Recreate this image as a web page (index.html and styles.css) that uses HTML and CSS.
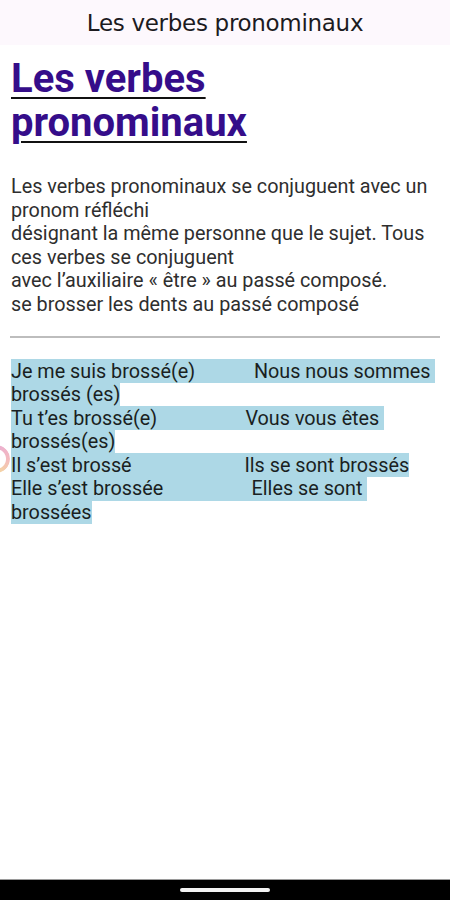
FILE: index.html
```html
<!DOCTYPE html>
<html lang="fr">
<head>
<meta charset="utf-8">
<title>Les verbes pronominaux</title>
<link rel="stylesheet" href="styles.css">
</head>
<body>
<div class="screen">
  <header class="appbar">Les verbes pronominaux</header>
  <main class="content">
    <h1 class="title">Les verbes pronominaux</h1>
    <p class="intro">Les verbes pronominaux se conjuguent avec un pronom réfléchi<br>désignant la même personne que le sujet. Tous ces verbes se conjuguent<br>avec l’auxiliaire « être » au passé composé.<br>se brosser les dents au passé composé</p>
    <hr class="rule">
    <p class="conj"><span class="hl">Je me suis brossé(e)            Nous nous sommes brossés (es)
Tu t’es brossé(e)                  Vous vous êtes brossés(es)
Il s’est brossé                       Ils se sont brossés
Elle s’est brossée                  Elles se sont brossées</span></p>
  </main>
  <div class="touch"></div>
  <footer class="navbar"><span class="pill"></span></footer>
</div>
</body>
</html>
```
FILE: styles.css
```css
html, body {
  margin: 0;
  padding: 0;
  background: #ffffff;
}
.screen {
  position: relative;
  width: 450px;
  height: 900px;
  display: flex;
  flex-direction: column;
  overflow: hidden;
  font-family: Roboto, "Noto Sans", sans-serif;
}
.appbar {
  height: 45px;
  flex: 0 0 45px;
  background: #fdf8fd;
  display: flex;
  align-items: center;
  justify-content: center;
  font-family: "DejaVu Sans", sans-serif;
  font-size: 23px;
  color: #1c1b1f;
  letter-spacing: -0.3px;
}
.content {
  flex: 1 1 auto;
  padding: 0 10px 0 11px;
}
.title {
  margin: 12px 0 0;
  font-size: 40px;
  line-height: 44px;
  font-weight: 700;
  color: #350d8a;
  text-decoration: underline;
  text-decoration-color: #111;
  text-decoration-thickness: 2px;
  text-underline-offset: 5px;
}
.intro {
  margin: 30px 0 0;
  font-size: 19.8px;
  line-height: 23.6px;
  color: #2e2e2e;
}
.rule {
  margin: 19px 0 0 -1px;
  border: 0;
  height: 2px;
  background: #bdbdbd;
}
.conj {
  margin: 22px 0 0;
  font-size: 19.8px;
  line-height: 23.5px;
  color: #1a1f22;
  white-space: pre-wrap;
}
.hl {
  background: #add8e6;
  padding: 0.6px 0;
}
.touch {
  position: absolute;
  left: -18px;
  top: 445px;
  width: 28px;
  height: 28px;
  border-radius: 50%;
  background: conic-gradient(from 0deg, #e9a6cf, #f2b3b8 25%, #f3cf9c 45%, #e8e49a 60%, #dce8a6 75%, #e9a6cf);
  -webkit-mask: radial-gradient(circle, transparent 9.5px, #000 10.5px);
  mask: radial-gradient(circle, transparent 9.5px, #000 10.5px);
  opacity: 0.9;
}
.navbar {
  flex: 0 0 20px;
  height: 20px;
  background: #000;
  border-top: 1px solid #9a9a9a;
  display: flex;
  align-items: center;
  justify-content: center;
}
.pill {
  width: 90px;
  height: 4px;
  border-radius: 2px;
  background: #f2f2f2;
}
```
